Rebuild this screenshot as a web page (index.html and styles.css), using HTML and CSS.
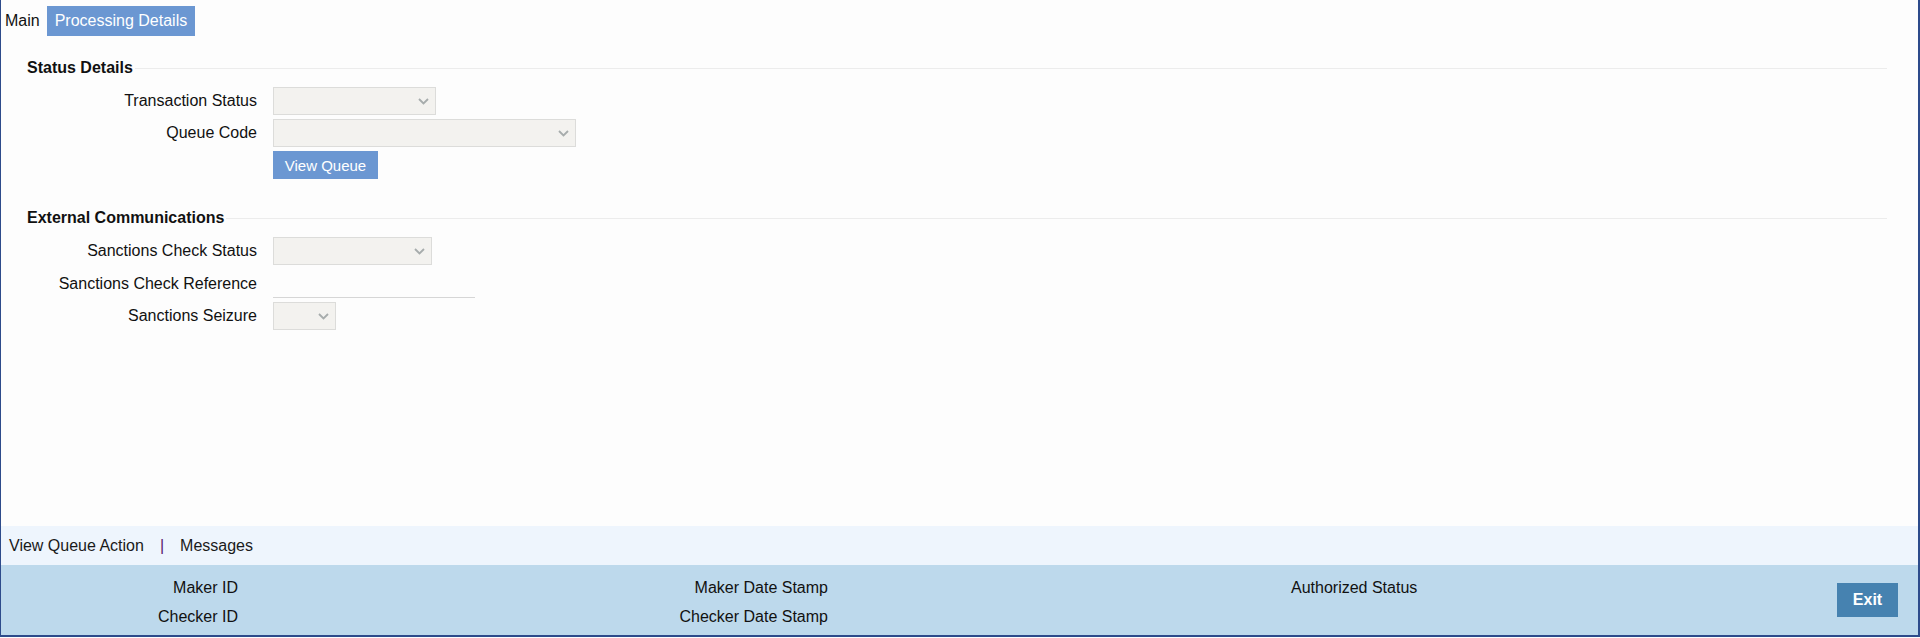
FILE: index.html
```html
<!DOCTYPE html>
<html lang="en">
<head>
    <meta charset="UTF-8">
    <title>Processing Details</title>
    <link rel="stylesheet" href="styles.css">
</head>
<body>
    <div class="window">
        <div class="content">
            <div class="tabs">
                <span class="tab">Main</span>
                <span class="tab active">Processing Details</span>
            </div>

            <div class="section">
                <div class="section-title"><span>Status Details</span><div class="rule"></div></div>
                <div class="form">
                    <label>Transaction Status</label>
                    <div class="select w-trans">
                        <svg width="11" height="7" viewBox="0 0 11 7"><path d="M1 1l4.5 4.5L10 1" fill="none" stroke="#a7acac" stroke-width="1.8"/></svg>
                    </div>

                    <label>Queue Code</label>
                    <div class="select w-queue">
                        <svg width="11" height="7" viewBox="0 0 11 7"><path d="M1 1l4.5 4.5L10 1" fill="none" stroke="#a7acac" stroke-width="1.8"/></svg>
                    </div>

                    <span></span>
                    <div><button class="btn-blue">View Queue</button></div>
                </div>
            </div>

            <div class="section ext">
                <div class="section-title"><span>External Communications</span><div class="rule"></div></div>
                <div class="form">
                    <label>Sanctions Check Status</label>
                    <div class="select w-check">
                        <svg width="11" height="7" viewBox="0 0 11 7"><path d="M1 1l4.5 4.5L10 1" fill="none" stroke="#a7acac" stroke-width="1.8"/></svg>
                    </div>

                    <label>Sanctions Check Reference</label>
                    <div class="text-input"></div>

                    <label>Sanctions Seizure</label>
                    <div class="select w-seize">
                        <svg width="11" height="7" viewBox="0 0 11 7"><path d="M1 1l4.5 4.5L10 1" fill="none" stroke="#a7acac" stroke-width="1.8"/></svg>
                    </div>
                </div>
            </div>
        </div>

        <div class="action-bar">
            <a>View Queue Action</a>
            <span class="sep">|</span>
            <a>Messages</a>
        </div>

        <div class="footer">
            <div class="audit">
                <span class="c1">Maker ID</span>
                <span class="c2">Maker Date Stamp</span>
                <span class="c1">Checker ID</span>
                <span class="c2">Checker Date Stamp</span>
            </div>
            <div class="auth">Authorized Status</div>
            <button class="btn-exit">Exit</button>
        </div>
    </div>
</body>
</html>
```

FILE: styles.css
```css
html, body {
    margin: 0;
    padding: 0;
    background-color: #fdfdfd;
}

body {
    font-family: "Liberation Sans", Arial, sans-serif;
    font-size: 16px;
    color: #111;
}

.window {
    height: 637px;
    display: flex;
    flex-direction: column;
    border-left: 1px solid #2d4b8b;
    border-right: 2px solid #2d4b8b;
    border-bottom: 2px solid #2d4b8b;
    box-sizing: border-box;
}

.content {
    flex: 1;
}

.tabs {
    display: flex;
    padding-top: 6px;
    padding-left: 0;
}

.tab {
    height: 30px;
    line-height: 30px;
    padding: 0 7px 0 4px;
}

.tab.active {
    background-color: #6b97d2;
    color: #fff;
    padding: 0 8px;
}

.section {
    margin: 22px 31px 0 26px;
}

.section.ext {
    margin-top: 29px;
}

.section-title {
    display: flex;
    align-items: center;
    height: 20px;
    font-weight: bold;
}

.section-title .rule {
    flex: 1;
    height: 1px;
    background-color: #ececec;
    margin-left: 2px;
}

.form {
    display: grid;
    grid-template-columns: 230px auto;
    column-gap: 16px;
    row-gap: 4px;
    margin-top: 9px;
    align-items: center;
}

.form label {
    text-align: right;
}

.select {
    height: 28px;
    background-color: #f3f2ef;
    border: 1px solid #dcdcda;
    box-sizing: border-box;
    display: flex;
    align-items: center;
    justify-content: flex-end;
    padding-right: 6px;
}

.w-trans { width: 163px; }
.w-queue { width: 303px; }
.w-check { width: 159px; }
.w-seize { width: 63px; }

.text-input {
    width: 202px;
    height: 29px;
    border-bottom: 1px solid #d6d6d6;
    box-sizing: border-box;
}

.btn-blue {
    font-family: "Liberation Sans", Arial, sans-serif;
    font-size: 15px;
    background-color: #6b97d2;
    color: #fff;
    border: none;
    height: 28px;
    width: 105px;
    padding: 0;
    cursor: pointer;
}

.action-bar {
    height: 39px;
    background-color: #eef5fd;
    display: flex;
    align-items: center;
    padding-left: 8px;
    color: #1a1a1a;
}

.action-bar .sep {
    color: #5a1b6b;
    margin: 0 16px 0 16px;
}

.footer {
    height: 70px;
    background-color: #bdd9ec;
    display: flex;
    align-items: flex-start;
}

.audit {
    display: grid;
    grid-template-columns: 237px 590px;
    grid-auto-rows: 29px;
    align-items: center;
    padding-top: 8px;
}

.audit span {
    text-align: right;
}

.auth {
    margin-left: 463px;
    height: 29px;
    line-height: 29px;
    margin-top: 8px;
}

.btn-exit {
    margin: 18px 20px 0 auto;
    width: 61px;
    height: 34px;
    background-color: #4682b0;
    color: #fff;
    border: none;
    font-family: "Liberation Sans", Arial, sans-serif;
    font-size: 16px;
    font-weight: bold;
    padding: 0;
}
```
